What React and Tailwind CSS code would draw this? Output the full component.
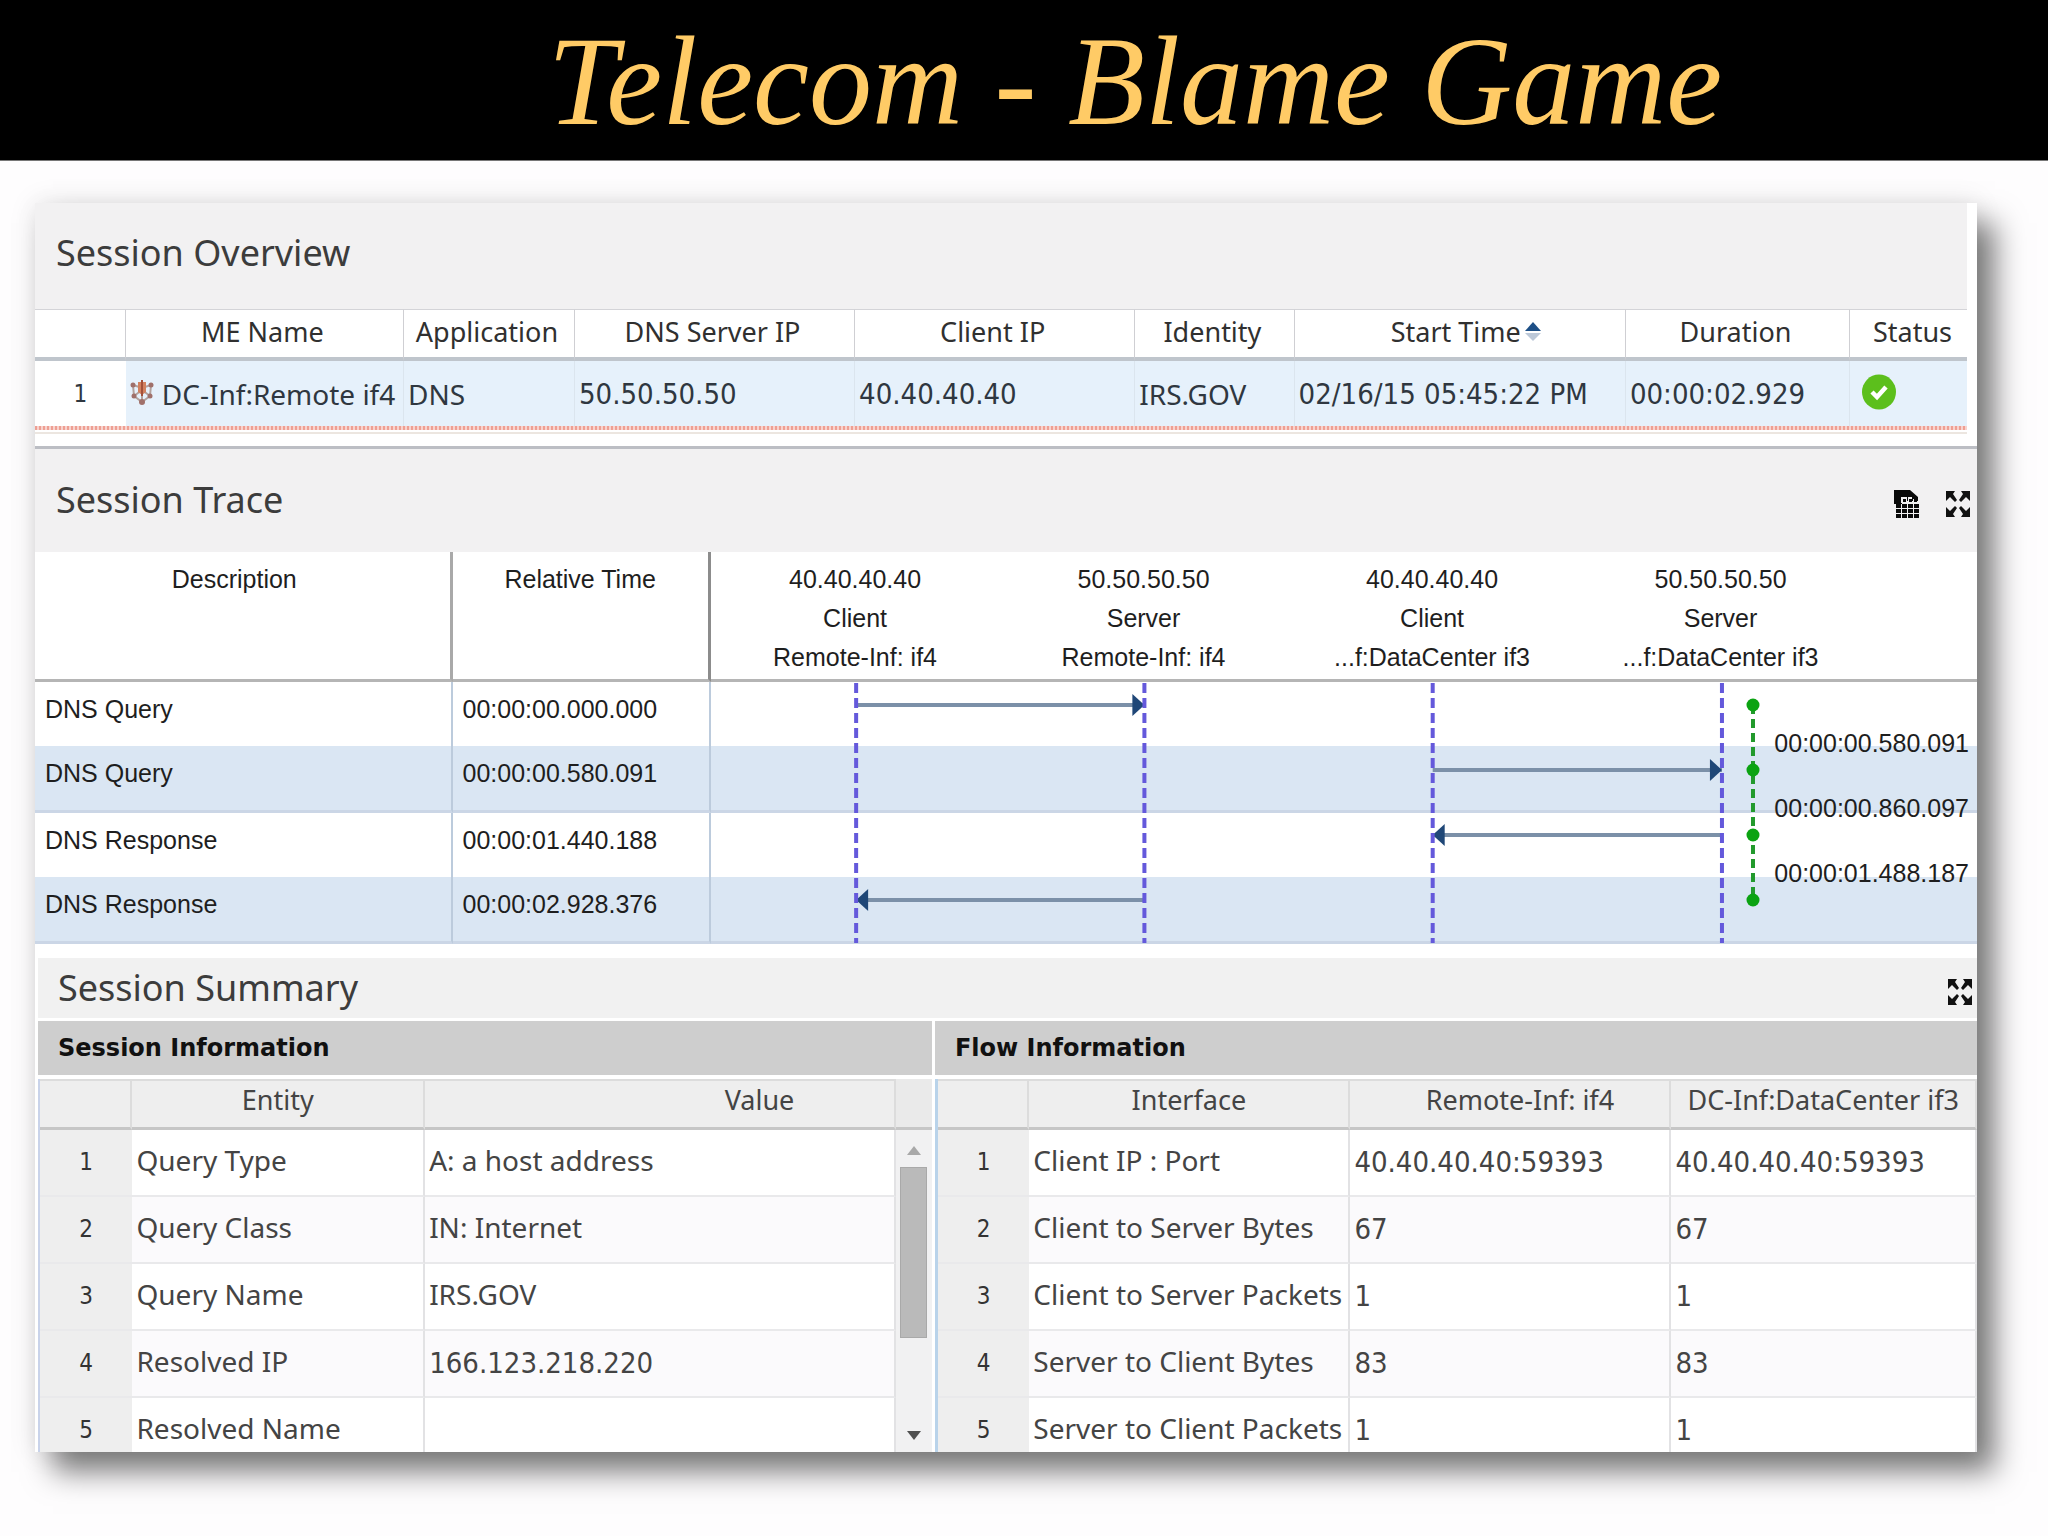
import React from "react";

const NOTO = "font-['Noto_Sans',sans-serif]";
const NUM = "font-['DejaVu_Sans_Condensed','Noto_Sans',sans-serif]";

function ExpandIcon() {
  return (
    <svg viewBox="0 0 26 28" className="h-7 w-[26px]" aria-hidden="true">
      <g fill="#111">
        <path d="M1 1h9l-2 3 4 6-2 2-5-5-4 4z" />
        <path d="M25 1h-9l2 3-4 6 2 2 5-5 4 4z" />
        <path d="M1 27h9l-2-3 4-6-2-2-5 5-4-4z" />
        <path d="M25 27h-9l2-3-4-6 2-2 5 5 4-4z" />
      </g>
    </svg>
  );
}

function SheetIcon() {
  return (
    <svg viewBox="0 0 26 28" className="h-7 w-[26px]" aria-hidden="true">
      <path d="M0 0h16l8 7v4H8v3H0z" fill="#0a0a0a" />
      <g fill="#f2f1f2">
        <path d="M7 7h6v6H7zM14 7h4v6h-4zM19 9h4v4h-4z" />
      </g>
      <g fill="#0a0a0a">
        {[9, 15, 20].map((x) => (
          <rect key={x} x={x} y="9" width="3" height="3" />
        ))}
        {[14, 19, 24].map((y) =>
          [2, 8, 14, 20].map((x) => <rect key={`${x}-${y}`} x={x} y={y} width="5" height="4" />)
        )}
      </g>
    </svg>
  );
}

function DeviceIcon() {
  return (
    <svg viewBox="0 0 24 26" className="mb-1 h-[26px] w-6 shrink-0" aria-hidden="true">
      <path d="M3 6l1 11 8 6 8-6 1-11M12 3v20M3 6l9 3 9-3M4 17l8-6 8 6" fill="none" stroke="#b3a19c" strokeWidth="2" />
      <path d="M8 3h8v10l-4 3-4-3z" fill="#d2815f" />
      <path d="M12 1v16" stroke="#a3513a" strokeWidth="2" />
      <g fill="#a0706a">
        <circle cx="3" cy="6" r="2.500" />
        <circle cx="21" cy="6" r="2.500" />
        <circle cx="4" cy="17" r="2.500" />
        <circle cx="20" cy="17" r="2.500" />
        <circle cx="12" cy="23" r="3" />
      </g>
    </svg>
  );
}

function CheckIcon() {
  return (
    <svg viewBox="0 0 34 36" className="mb-1 h-9 w-[34px]" role="img" aria-label="OK">
      <ellipse cx="17" cy="18" rx="17" ry="17.500" fill="#5cbf1c" />
      <path d="M10 18l5 5 9-10" fill="none" stroke="#fff" strokeWidth="4.500" />
    </svg>
  );
}

function SortIcon() {
  return (
    <svg viewBox="0 0 16 20" className="h-5 w-4" aria-hidden="true">
      <path d="M8 0l8 9H0z" fill="#1d4f86" />
      <path d="M0 11h16l-8 8z" fill="#bcc8d8" />
    </svg>
  );
}

const overviewCols = [
  { label: "", w: "w-[4.7%]" },
  { label: "ME Name", w: "w-[14.4%]" },
  { label: "Application", w: "w-[8.85%]" },
  { label: "DNS Server IP", w: "w-[14.5%]" },
  { label: "Client IP", w: "w-[14.5%]" },
  { label: "Identity", w: "w-[8.25%]" },
  { label: "Start Time", w: "w-[17.15%]", sort: true },
  { label: "Duration", w: "w-[11.6%]" },
  { label: "Status", w: "w-auto" },
];

function Overview() {
  const cell = "border-r border-[#dbe5ee] bg-[#e6f1fb] px-1 whitespace-nowrap";
  return (
    <section className="bg-white pr-[10px] pb-3">
      <h2 className="bg-[#f2f1f2] px-[21px] pt-[25px] pb-[31px] text-[36px] leading-[50px] text-[#3c3c3c]">
        Session Overview
      </h2>
      <table className="w-full table-fixed border-separate border-spacing-0">
        <thead>
          <tr className="h-[52px] text-[27px] leading-[36px] text-[#303030]">
            {overviewCols.map((c, i) => (
              <th
                key={i}
                scope="col"
                className={`${c.w} border-t border-b-4 border-r border-t-[#d4d4d8] border-r-[#cfcfd3] border-b-[#bfc5cc] p-0 pr-1 pb-1 font-normal whitespace-nowrap last:border-r-0 last:pl-3`}
              >
                {c.sort ? (
                  <button type="button" className="inline-flex items-center gap-1 pl-4">
                    {c.label}
                    <SortIcon />
                  </button>
                ) : (
                  c.label
                )}
              </th>
            ))}
          </tr>
        </thead>
        <tbody>
          <tr className="h-[65px] text-[28px] leading-[36px] text-[#2f3740]">
            <td className={`${NUM} bg-white text-center text-[24px]`}>1</td>
            <td className={cell}>
              <div className="flex items-center gap-2">
                <DeviceIcon />
                <span>DC-Inf:Remote if4</span>
              </div>
            </td>
            <td className={cell}>DNS</td>
            <td className={`${cell} ${NUM} text-[29px]`}>50.50.50.50</td>
            <td className={`${cell} ${NUM} text-[29px]`}>40.40.40.40</td>
            <td className={cell}>IRS.GOV</td>
            <td className={`${cell} ${NUM} text-[29px]`}>02/16/15 05:45:22 PM</td>
            <td className={`${cell} ${NUM} text-[29px]`}>00:00:02.929</td>
            <td className="bg-[#e6f1fb] pl-3">
              <CheckIcon />
            </td>
          </tr>
        </tbody>
      </table>
      <div className="h-1 bg-[repeating-linear-gradient(90deg,#ee9f93_0_2px,#f8d3cd_2px_4px)]" />
      <div className="h-1 border-b-2 border-[#ece6e0]" />
    </section>
  );
}

const traceRows = [
  ["DNS Query", "00:00:00.000.000"],
  ["DNS Query", "00:00:00.580.091"],
  ["DNS Response", "00:00:01.440.188"],
  ["DNS Response", "00:00:02.928.376"],
];

const lifelines = [
  ["40.40.40.40", "Client", "Remote-Inf: if4"],
  ["50.50.50.50", "Server", "Remote-Inf: if4"],
  ["40.40.40.40", "Client", "...f:DataCenter if3"],
  ["50.50.50.50", "Server", "...f:DataCenter if3"],
];

const gaps = ["00:00:00.580.091", "00:00:00.860.097", "00:00:01.488.187"];

const arrows = [
  [145, 433, 23],
  [721, 1010, 88],
  [1010, 721, 153],
  [433, 145, 218],
];

function SequenceChart() {
  return (
    <div className="relative">
      {traceRows.map((_, i) => (
        <div key={i} className={i % 2 ? "h-[67px] border-b-3 border-[#cbd6e6] bg-[#dae6f3]" : "h-16 bg-white"} />
      ))}
      <svg
        viewBox="0 0 1265 262"
        preserveAspectRatio="none"
        className="absolute inset-0 h-full w-full"
        aria-hidden="true"
      >
        {arrows.map(([from, to, y]) => {
          const back = to > from ? -12 : 12;
          return (
            <g key={y}>
              <path d={`M${from} ${y}H${to}`} stroke="#7b90a8" strokeWidth="4" />
              <path d={`M${to} ${y}l${back} -11v22z`} fill="#1f4777" />
            </g>
          );
        })}
        {[145, 433, 721, 1010].map((x) => (
          <path key={x} d={`M${x} 1V261`} stroke="#6459db" strokeWidth="4" strokeDasharray="10 5" />
        ))}
        <path d="M1041 23V218" stroke="#229a2c" strokeWidth="4" strokeDasharray="9 5" />
        {[23, 88, 153, 218].map((y) => (
          <circle key={y} cx="1041" cy={y} r="6.500" fill="#0ba312" />
        ))}
      </svg>
      <ul className="absolute top-[46px] right-2 text-[25px] leading-[30px]">
        {gaps.map((g) => (
          <li key={g} className="h-[65px]">
            {g}
          </li>
        ))}
      </ul>
    </div>
  );
}

function Trace() {
  const head = "border-b-3 border-b-[#b5b5b5] p-0 pt-3 align-top font-normal";
  return (
    <section className="border-t-3 border-[#bcbec4] bg-white pb-[14px]">
      <header className="flex items-center bg-[#f2f1f2] pt-[26px] pr-[6px] pb-[27px] pl-[21px]">
        <h2 className="grow text-[36px] leading-[50px] text-[#3c3c3c]">Session Trace</h2>
        <div className="flex gap-[25px] pt-2">
          <button type="button" aria-label="Export table">
            <SheetIcon />
          </button>
          <button type="button" aria-label="Expand session trace">
            <ExpandIcon />
          </button>
        </div>
      </header>
      <table className="w-full table-fixed border-separate border-spacing-0 font-['Liberation_Sans',sans-serif] text-[25px] leading-[30px] text-[#1e1e1e]">
        <thead>
          <tr className="h-[130px]">
            <th scope="col" className={`${head} w-[21.5%] border-r-3 border-r-[#a9a9a9]`}>
              <span className="pr-4">Description</span>
            </th>
            <th scope="col" className={`${head} w-[13.3%] border-r-3 border-r-[#8c8c8c]`}>
              Relative Time
            </th>
            <th scope="col" className={head}>
              <div className="grid grid-cols-[288fr_288fr_288fr_288fr_112fr] leading-[39px]">
                {lifelines.map((l, i) => (
                  <div key={i} className="-mt-1">
                    {l.map((t) => (
                      <div key={t} className="whitespace-nowrap">
                        {t}
                      </div>
                    ))}
                  </div>
                ))}
              </div>
            </th>
          </tr>
        </thead>
        <tbody>
          {traceRows.map(([d, t], i) => {
            const row = i % 2 ? "h-[67px] border-b-3 border-b-[#cbd6e6] bg-[#dae6f3]" : "h-16";
            return (
              <tr key={i}>
                <td className={`${row} border-r-2 border-r-[#bccbdc] p-0 pt-3 pl-[10px] align-top`}>{d}</td>
                <td className={`${row} border-r-2 border-r-[#bccbdc] p-0 pt-3 pl-[10px] align-top`}>{t}</td>
                {i === 0 && (
                  <td rowSpan={4} className="p-0 align-top">
                    <SequenceChart />
                  </td>
                )}
              </tr>
            );
          })}
        </tbody>
      </table>
    </section>
  );
}

const sessionRows = [
  ["Query Type", "A: a host address"],
  ["Query Class", "IN: Internet"],
  ["Query Name", "IRS.GOV"],
  ["Resolved IP", "166.123.218.220"],
  ["Resolved Name", ""],
];

const flowRows = [
  ["Client IP : Port", "40.40.40.40:59393", "40.40.40.40:59393"],
  ["Client to Server Bytes", "67", "67"],
  ["Client to Server Packets", "1", "1"],
  ["Server to Client Bytes", "83", "83"],
  ["Server to Client Packets", "1", "1"],
];

function DataTable({ cols, rows }) {
  return (
    <table className="w-full table-fixed border-separate border-spacing-0 text-[28px] leading-[36px] text-[#444]">
      <thead>
        <tr className="h-[51px]">
          {cols.map((c, i) => (
            <th
              key={i}
              scope="col"
              className={`${c.w} border-t-2 border-r-2 border-b-3 border-t-[#dcdcdc] border-r-[#dcdcdc] border-b-[#c6c6c6] bg-[#eee] p-0 pb-2 font-normal whitespace-nowrap text-[27px]`}
            >
              {c.label}
            </th>
          ))}
        </tr>
      </thead>
      <tbody>
        {rows.map((r, i) => {
          const last = i === rows.length - 1;
          const size = last ? "h-[54px]" : "h-[67px] border-b-2 border-b-[#e9e9eb]";
          return (
            <tr key={i} className={i % 2 ? "bg-[#fbfafc]" : "bg-white"}>
              <th
                scope="row"
                className={`${size} ${NUM} bg-[#eee] p-0 pt-[14px] text-center align-top text-[24px] font-normal text-[#333]`}
              >
                {i + 1}
              </th>
              {r.map((v, j) => (
                <td
                  key={j}
                  className={`${size} ${/^[0-9]/.test(v) ? `${NUM} text-[29px] pt-[14px]` : "pt-3"} border-r-2 border-r-[#e2e2e4] pl-1 align-top whitespace-nowrap`}
                >
                  {v}
                </td>
              ))}
            </tr>
          );
        })}
      </tbody>
    </table>
  );
}

function Summary() {
  const bar =
    "bg-[#cecece] pl-5 font-['DejaVu_Sans',sans-serif] text-[24px] leading-[54px] font-bold whitespace-nowrap text-[#111]";
  return (
    <section className="bg-white pl-[3px]">
      <header className="flex items-center bg-[#f1f1f1] py-1 pr-1 pl-5">
        <h2 className="grow text-[36px] leading-[52px] text-[#3c3c3c]">Session Summary</h2>
        <button type="button" className="pt-2" aria-label="Expand session summary">
          <ExpandIcon />
        </button>
      </header>
      <div className="flex gap-[3px] pt-[3px]">
        <div className="w-[46.1%] shrink-0">
          <h3 className={bar}>Session Information</h3>
          <div className="mt-1 flex border-l-2 border-[#c9d3ea]">
            <div className="min-w-0 flex-1">
              <DataTable
                cols={[
                  { label: "", w: "w-[10.8%]" },
                  { label: "Entity", w: "w-[34.2%]" },
                  { label: <span className="pl-[200px]">Value</span>, w: "w-auto" },
                ]}
                rows={sessionRows}
              />
            </div>
            <div className="flex w-9 shrink-0 flex-col items-center bg-[#f1f1f2]">
              <div className="h-[51px] w-full border-b-3 border-[#c6c6c6] bg-[#eaeaea]" />
              <button type="button" aria-label="Scroll up" className="pt-4 pb-3">
                <svg viewBox="0 0 14 9" className="h-[9px] w-[14px]">
                  <path d="M7 0l7 9H0z" fill="#a8a8a8" />
                </svg>
              </button>
              <div className="h-[171px] w-[27px] border border-[#a9a9a9] bg-[#bababa]" />
              <button type="button" aria-label="Scroll down" className="mt-auto pb-3">
                <svg viewBox="0 0 14 9" className="h-[9px] w-[14px]">
                  <path d="M7 9l7-9H0z" fill="#505050" />
                </svg>
              </button>
            </div>
          </div>
        </div>
        <div className="min-w-0 flex-1">
          <h3 className={bar}>Flow Information</h3>
          <div className="mt-1 border-l-3 border-[#b9d3ea]">
            <DataTable
              cols={[
                { label: "", w: "w-[8.8%]" },
                { label: "Interface", w: "w-[30.9%]" },
                { label: <span className="pl-5">Remote-Inf: if4</span>, w: "w-[30.9%]" },
                { label: "DC-Inf:DataCenter if3", w: "w-auto" },
              ]}
              rows={flowRows}
            />
          </div>
        </div>
      </div>
    </section>
  );
}

export default function App() {
  return (
    <div className={`${NOTO} min-h-screen bg-[#fefdfe] pb-[85px]`}>
      <header className="border-b border-[#777] bg-black">
        <h1 className="pt-1 pl-[222px] text-center font-['Liberation_Serif',serif] text-[126px] leading-[156px] text-[#ffcb66] italic">
          Telecom - Blame Game
        </h1>
      </header>
      <main className="mt-[42px] mr-[71px] ml-[35px] shadow-[0_0_26px_rgba(0,0,0,0.10),18px_20px_28px_rgba(0,0,0,0.5)]">
        <Overview />
        <Trace />
        <Summary />
      </main>
    </div>
  );
}
